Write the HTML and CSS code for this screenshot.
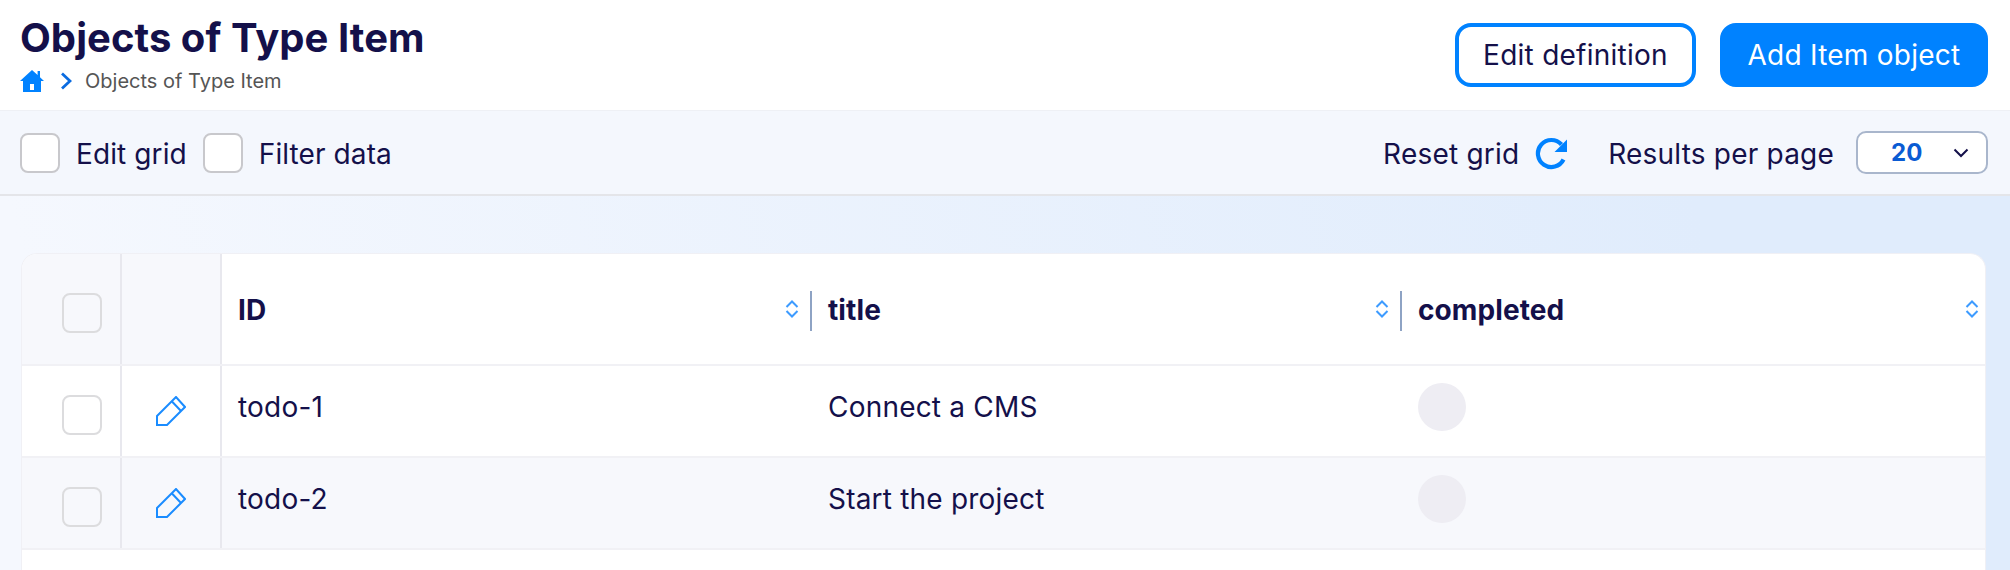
FILE: index.html
```html
<!DOCTYPE html>
<html lang="en">

<head>
    <meta charset="UTF-8">
    <meta name="viewport" content="width=device-width, initial-scale=1.0">
    <title>Objects of Type Item</title>
    <link rel="stylesheet" href="styles.css">
</head>

<body>
    <header class="page-head">
        <div>
            <h1>Objects of Type Item</h1>
            <nav class="crumbs">
                <svg class="home-icon" viewBox="0 0 24 22" width="24" height="22">
                    <path fill="#0082ff" d="M12 0 L17.6 5 V1 H20 V7.2 L24 11 H21 V22 H3 V11 H0 Z" />
                    <rect fill="#fff" x="10" y="14" width="4" height="6" />
                </svg>
                <svg class="crumb-arrow" viewBox="0 0 12 18" width="12" height="18">
                    <path fill="none" stroke="#0a6be0" stroke-width="2.8" d="M2 1.5 L10 9 L2 16.5" />
                </svg>
                <span>Objects of Type Item</span>
            </nav>
        </div>
        <div class="head-actions">
            <button class="btn btn-outline">Edit definition</button>
            <button class="btn btn-primary">Add Item object</button>
        </div>
    </header>

    <section class="toolbar">
        <label class="tool-check"><span class="box"></span><span class="tool-text">Edit grid</span></label>
        <label class="tool-check"><span class="box"></span><span class="tool-text">Filter data</span></label>
        <div class="toolbar-right">
            <div class="reset">
                <span class="tool-text">Reset grid</span>
                <svg viewBox="0 0 34 34" width="34" height="34">
                    <path fill="none" stroke="#0082ff" stroke-width="4.2" d="M28.5 23.5 A13.5 13.5 0 1 1 26.5 8.5" />
                    <path fill="#0082ff" d="M32 3.5 V16 H19.5 Z" />
                </svg>
            </div>
            <span class="tool-text per-page">Results per page</span>
            <div class="page-select">
                <b>20</b>
                <svg viewBox="0 0 16 10" width="16" height="10">
                    <path fill="none" stroke="#14104a" stroke-width="2" d="M1.5 1.5 L8 8 L14.5 1.5" />
                </svg>
            </div>
        </div>
    </section>

    <main class="content">
        <div class="grid-card">
            <div class="row row-head">
                <div class="cell cell-check"><span class="box box-light"></span></div>
                <div class="cell cell-tool"></div>
                <div class="cell col">ID
                    <svg class="sort" viewBox="0 0 14 20" width="14" height="20"><path d="M1.5 8 L7 2.5 L12.5 8 M1.5 12 L7 17.5 L12.5 12" /></svg>
                </div>
                <div class="cell col col-split">title
                    <svg class="sort" viewBox="0 0 14 20" width="14" height="20"><path d="M1.5 8 L7 2.5 L12.5 8 M1.5 12 L7 17.5 L12.5 12" /></svg>
                </div>
                <div class="cell col col-split">completed
                    <svg class="sort" viewBox="0 0 14 20" width="14" height="20"><path d="M1.5 8 L7 2.5 L12.5 8 M1.5 12 L7 17.5 L12.5 12" /></svg>
                </div>
            </div>

            <div class="row">
                <div class="cell cell-check"><span class="box box-light"></span></div>
                <div class="cell cell-tool">
                    <svg class="pencil" viewBox="0 0 30 30" width="30" height="30"><path d="M1 20 L20 1 L29 11 L11 29 H1 Z M16 5.5 L25 15" /></svg>
                </div>
                <div class="cell col">todo-1</div>
                <div class="cell col">Connect a CMS</div>
                <div class="cell col"><span class="flag"></span></div>
            </div>

            <div class="row row-alt">
                <div class="cell cell-check"><span class="box box-light"></span></div>
                <div class="cell cell-tool">
                    <svg class="pencil" viewBox="0 0 30 30" width="30" height="30"><path d="M1 20 L20 1 L29 11 L11 29 H1 Z M16 5.5 L25 15" /></svg>
                </div>
                <div class="cell col">todo-2</div>
                <div class="cell col">Start the project</div>
                <div class="cell col"><span class="flag"></span></div>
            </div>
        </div>
    </main>
</body>

</html>
```

FILE: styles.css
```css
* {
    box-sizing: border-box;
}

html,
body {
    height: 100%;
}

body {
    margin: 0;
    display: flex;
    flex-direction: column;
    overflow: hidden;
    font-family: Inter, "Noto Sans", sans-serif;
    font-size: 28px;
    letter-spacing: 0.2px;
    color: #14104a;
    background-color: #fff;
}

h1 {
    margin: 0 0 8px;
    font-size: 40px;
    line-height: 46px;
    font-weight: 700;
    letter-spacing: 0.05px;
}

/* Top header */
.page-head {
    display: flex;
    justify-content: space-between;
    align-items: flex-start;
    height: 110px;
    padding: 15px 22px 0 20px;
}

.crumbs {
    display: flex;
    align-items: center;
    font-size: 20px;
    line-height: 24px;
    letter-spacing: 0;
    color: #555;
}

.home-icon {
    margin-right: 16px;
}

.crumb-arrow {
    margin-right: 13px;
}

.head-actions {
    display: flex;
    gap: 24px;
    padding-top: 8px;
}

.btn {
    height: 64px;
    border-radius: 16px;
    font-family: inherit;
    font-size: 28px;
    letter-spacing: 0.25px;
    border: 4px solid #0082ff;
    padding: 0;
}

.btn-outline {
    width: 241px;
    background-color: #fff;
    color: #14104a;
}

.btn-primary {
    width: 268px;
    background-color: #0082ff;
    color: #fff;
}

/* Toolbar */
.toolbar {
    display: flex;
    align-items: center;
    gap: 16px;
    height: 86px;
    padding: 0 22px 0 20px;
    background-color: #f4f7fd;
    border-top: 1px solid #eef0f5;
    border-bottom: 2px solid #e4e5e9;
}

.tool-check {
    display: flex;
    align-items: center;
    gap: 16px;
    letter-spacing: 0.1px;
}

.tool-text {
    padding-top: 2px;
}

.box {
    display: block;
    width: 40px;
    height: 40px;
    background-color: #fff;
    border: 2px solid #c8c8cc;
    border-radius: 8px;
}

.box-light {
    background-color: transparent;
    border-color: #dcdcde;
}

.toolbar-right {
    display: flex;
    align-items: center;
    margin-left: auto;
}

.reset {
    display: flex;
    align-items: center;
    gap: 16px;
    margin-right: 39px;
}

.per-page {
    margin-right: 22px;
}

.page-select {
    display: flex;
    align-items: center;
    justify-content: space-between;
    width: 132px;
    height: 43px;
    padding: 0 17px 0 33px;
    background-color: #fff;
    border: 2px solid #a9b6cc;
    border-radius: 10px;
}

.page-select b {
    font-size: 24px;
    color: #0a5bd3;
}

/* Grid */
.content {
    flex: 1;
    padding: 57px 24px 0 21px;
    background: linear-gradient(75deg, #f5f8fe 5%, #e0ecfc 85%);
}

.grid-card {
    height: 100%;
    overflow: hidden;
    background-color: #fff;
    border: 1px solid #f0f0f5;
    border-bottom: 0;
    border-radius: 16px 16px 0 0;
}

.row {
    display: flex;
    height: 92px;
    border-bottom: 2px solid #f1f1f5;
}

.row-head {
    height: 112px;
}

.row-alt {
    background-color: #f7f8fc;
}

.cell {
    position: relative;
    display: flex;
    align-items: center;
    flex-shrink: 0;
}

.cell-check,
.cell-tool {
    width: 100px;
    border-right: 2px solid #e8e8ee;
}

.cell-check {
    padding: 8px 0 0 40px;
}

.cell-tool {
    justify-content: center;
}

.row-head .cell-check,
.row-head .cell-tool {
    background-color: #f7f8fc;
}

.col {
    width: 590px;
    padding: 0 0 8px 16px;
}

.row-head .col {
    padding: 2px 0 0 16px;
    font-weight: 700;
    letter-spacing: 0.1px;
}

.col-split::before {
    content: '';
    position: absolute;
    left: -2px;
    top: 37px;
    width: 2px;
    height: 40px;
    background-color: #8ea3c4;
}

.sort {
    position: absolute;
    right: 13px;
    top: 45px;
    fill: none;
    stroke: #3d9bff;
    stroke-width: 2;
}

.pencil {
    fill: none;
    stroke: #1a8cff;
    stroke-width: 2;
}

.flag {
    display: block;
    width: 48px;
    height: 48px;
    background-color: #eeedf3;
    border-radius: 50%;
}
```
